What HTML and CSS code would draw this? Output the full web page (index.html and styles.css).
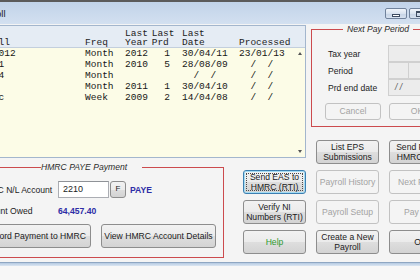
FILE: index.html
```html
<!DOCTYPE html>
<html lang="en">
<head>
    <meta charset="UTF-8">
    <meta name="viewport" content="width=device-width, initial-scale=1.0">
    <title>Payroll</title>
    <link rel="stylesheet" href="styles.css">
</head>
<body>
    <div class="window">
        <div class="titlebar">
            <span class="title">Payroll</span>
            <div class="caption">
                <span class="cap-btn"><span class="glyph-min"></span></span>
                <span class="cap-btn"><span class="glyph-max"></span></span>
                <span class="cap-btn close"></span>
            </div>
        </div>

        <div class="client">
            <div class="left">
                <!-- payroll list -->
                <div class="list">
                    <div class="list-head cols">
                        <span>Payroll</span><span>Freq</span><span>Last<br>Year</span><span>Last<br>Prd</span><span>Last<br>Date</span><span>Processed</span>
                    </div>
                    <div class="list-body">
                        <div class="rows">
                            <div class="cols"><span>Ltd 2012</span><span>Month</span><span>2012</span><span class="num">1</span><span>30/04/11</span><span>23/01/13</span></div>
                            <div class="cols"><span>Test 1</span><span>Month</span><span>2010</span><span class="num">5</span><span>28/08/09</span><span>  /  /</span></div>
                            <div class="cols"><span>Unit 4</span><span>Month</span><span></span><span class="num"></span><span>  /  /</span><span>  /  /</span></div>
                            <div class="cols"><span>Demo</span><span>Month</span><span>2011</span><span class="num">1</span><span>30/04/10</span><span>  /  /</span></div>
                            <div class="cols"><span>Public</span><span>Week</span><span>2009</span><span class="num">2</span><span>14/04/08</span><span>  /  /</span></div>
                        </div>
                        <div class="scroll">
                            <span class="arrow up"></span>
                            <span class="arrow down"></span>
                        </div>
                    </div>
                </div>

                <div class="lower">
                    <fieldset class="group paye">
                        <legend>HMRC PAYE Payment</legend>
                        <div class="paye-body">
                            <div class="field-row">
                                <span class="field-label">HMRC N/L Account</span>
                                <span class="text-input">2210</span>
                                <button class="btn f-btn">F</button>
                                <span class="paye-tag">PAYE</span>
                            </div>
                            <div class="field-row owed-row">
                                <span class="field-label">Amount Owed</span>
                                <span class="amount">64,457.40</span>
                            </div>
                            <div class="paye-actions">
                                <button class="btn record">Record Payment to HMRC</button>
                                <button class="btn details">View HMRC Account Details</button>
                            </div>
                        </div>
                    </fieldset>

                    <div class="btn-col">
                        <button class="btn focused">Send EAS to<br>HMRC (RTI)</button>
                        <button class="btn">Verify NI<br>Numbers (RTI)</button>
                        <button class="btn help">Help</button>
                    </div>
                </div>
            </div>

            <div class="right">
                <fieldset class="group period">
                    <legend>Next Pay Period</legend>
                    <div class="period-body">
                        <div class="period-row">
                            <span class="period-label">Tax year</span>
                            <span class="box"></span>
                        </div>
                        <div class="period-row">
                            <span class="period-label">Period</span>
                            <span class="box short"></span>
                            <span class="box rest"></span>
                        </div>
                        <div class="period-row">
                            <span class="period-label">Prd end date</span>
                            <span class="box date">/ /</span>
                        </div>
                        <div class="period-actions">
                            <button class="btn small" disabled>Cancel</button>
                            <button class="btn small" disabled>OK</button>
                        </div>
                    </div>
                </fieldset>

                <div class="btn-grid">
                    <button class="btn">List EPS<br>Submissions</button>
                    <button class="btn">Send FPS to<br>HMRC (RTI)</button>
                    <button class="btn" disabled>Payroll History</button>
                    <button class="btn" disabled>Next Period</button>
                    <button class="btn" disabled>Payroll Setup</button>
                    <button class="btn" disabled>Pay Run</button>
                    <button class="btn">Create a New<br>Payroll</button>
                    <button class="btn">OK</button>
                </div>
            </div>
        </div>
        <div class="frame-bottom"></div>
    </div>
</body>
</html>
```

FILE: styles.css
```css
* {
    box-sizing: border-box;
}
html, body {
    margin: 0;
    height: 100%;
}
body {
    overflow: hidden;
    background: #f7f7f7;
    font-family: "Liberation Sans", Arial, sans-serif;
    font-size: 8.6px;
    color: #1c1c1c;
}
.window {
    width: 520px;
    margin-left: -34px;
}

/* title bar */
.titlebar {
    display: flex;
    height: 24px;
    border-top: 2px solid #5b5b5b;
    background: linear-gradient(#c1d3e9, #d3e0f0);
    padding: 0 10px 0 10.5px;
}
.title {
    align-self: center;
    font-size: 9.5px;
    color: #1e1e1e;
}
.caption {
    display: flex;
    gap: 2px;
    margin-left: auto;
    margin-top: 6px;
}
.cap-btn {
    display: flex;
    align-items: center;
    justify-content: center;
    width: 22px;
    height: 11px;
    border: 1px solid #71839c;
    border-radius: 2px;
    background: linear-gradient(#f1f5fa, #d9e3ef 50%, #c5d3e5 51%, #d6e1ef);
}
.cap-btn.close {
    width: 43px;
}
.glyph-min {
    width: 8px;
    height: 3px;
    margin-top: 4px;
    background: #fff;
    border: 1px solid #3d4b60;
}
.glyph-max {
    width: 8px;
    height: 6px;
    border: 1px solid #3d4b60;
    border-top-width: 2px;
}

/* client area */
.client {
    display: flex;
    height: 238px;
    background: #f4f4f4;
}
.left {
    width: 340px;
}
.right {
    margin-left: 5px;
}
.frame-bottom {
    height: 4px;
    border-top: 1px solid #8ea6c2;
    background: linear-gradient(#b4c9e1, #dbe6f2);
}

/* list */
.list {
    margin-top: 1px;
    height: 133px;
    border: 1px solid #a3b6cd;
    background: #fcfce7;
    font-family: "Liberation Mono", monospace;
    font-size: 9.52px;
    color: #161616;
}
.cols {
    display: grid;
    grid-template-columns: 115px 40px 26.7px 30.3px 57px 1fr;
}
.cols > span {
    white-space: pre;
}
.list-head {
    height: 22px;
    padding: 2px 0 0 3px;
    line-height: 9px;
    align-items: end;
    background: #e5ecf4;
    border-bottom: 1px solid #c3cfdd;
    color: #222;
}
.list-body {
    display: flex;
    height: 109px;
}
.rows {
    flex: 1;
    padding-left: 3px;
    line-height: 11px;
}
.num {
    text-align: right;
    padding-right: 12px;
}
.scroll {
    width: 10px;
    display: flex;
    flex-direction: column;
    justify-content: space-between;
    align-items: center;
    padding: 4px 0;
}
.arrow {
    width: 0;
    height: 0;
    border-left: 2.5px solid transparent;
    border-right: 2.5px solid transparent;
}
.arrow.up {
    border-bottom: 3px solid #555;
}
.arrow.down {
    border-top: 3px solid #555;
}

/* group boxes */
.group {
    margin: 0;
    padding: 0;
    min-width: 0;
    border: 1px solid #cc4b4e;
}
.group legend {
    padding: 0;
    font-style: italic;
    line-height: 10px;
    color: #2b2b2b;
}
.lower {
    display: flex;
    margin-top: 4px;
}
.paye {
    width: 258px;
    height: 96px;
}
.paye legend {
    width: 101px;
    margin-left: 74px;
    text-align: left;
}
.paye-body {
    padding: 9px 0 0 11px;
}
.field-row {
    display: flex;
    align-items: center;
    height: 17px;
}
.field-label {
    width: 80px;
    flex-shrink: 0;
}
.text-input {
    width: 51px;
    height: 17px;
    padding-left: 4px;
    line-height: 15px;
    font-size: 9px;
    background: #fff;
    border: 1px solid #abadb3;
    border-top-color: #8f9297;
}
.btn.f-btn {
    width: 16px;
    height: 17px;
    margin-left: 1px;
    font-size: 8px;
}
.paye-tag, .amount {
    font-weight: bold;
    color: #2d2da6;
}
.paye-tag {
    margin-left: 4px;
}
.owed-row {
    margin-top: 6px;
    height: 14px;
}
.paye-actions {
    display: flex;
    gap: 10px;
    margin: 6px 0 0 1px;
}
.btn.record {
    width: 112px;
    height: 24px;
}
.btn.details {
    width: 115px;
    height: 24px;
}

/* next pay period */
.period {
    width: 150px;
    height: 103px;
}
.period legend {
    margin-left: 31px;
    padding: 0 4px;
}
.period-body {
    padding: 11px 0 0 13px;
}
.period-row {
    display: flex;
    align-items: center;
}
.period-label {
    width: 63px;
    padding-left: 3px;
}
.box {
    width: 70px;
    height: 17px;
    background: #ececec;
    border: 1px solid #d0d0d0;
}
.box.short {
    width: 21px;
}
.box.rest {
    width: 50px;
    margin-left: -1px;
}
.box.date {
    padding-left: 6px;
    line-height: 15px;
    font-style: italic;
    color: #555;
}
.period-actions {
    display: flex;
    gap: 8px;
    margin-top: 7px;
}
.btn.small {
    width: 56px;
    height: 17px;
}

/* buttons */
.btn {
    display: flex;
    align-items: center;
    justify-content: center;
    padding: 0;
    font: inherit;
    line-height: 10.5px;
    text-align: center;
    color: #1a1a1a;
    border: 1px solid #8d8d8d;
    border-radius: 3px;
    background: linear-gradient(#f2f2f2, #ebebeb 50%, #dedede 51%, #d3d3d3);
}
.btn:disabled {
    color: #a3a3a3;
    border-color: #c2c2c2;
    background: #f4f4f4;
}
.btn.focused {
    border-color: #3c7fb1;
    box-shadow: inset 0 0 0 1px #a3dcf4;
    outline: 1px dotted #4a4a4a;
    outline-offset: -4px;
}
.btn.help {
    color: #2f9a2f;
}
.btn-col {
    display: grid;
    grid-auto-rows: 24px;
    row-gap: 6px;
    align-content: start;
    width: 63px;
    margin-left: 19px;
    padding-top: 8px;
}
.btn-grid {
    display: grid;
    grid-template-columns: 63px 63px;
    grid-auto-rows: 24px;
    gap: 6px 10px;
    margin: 13px 0 0 5px;
}
```
